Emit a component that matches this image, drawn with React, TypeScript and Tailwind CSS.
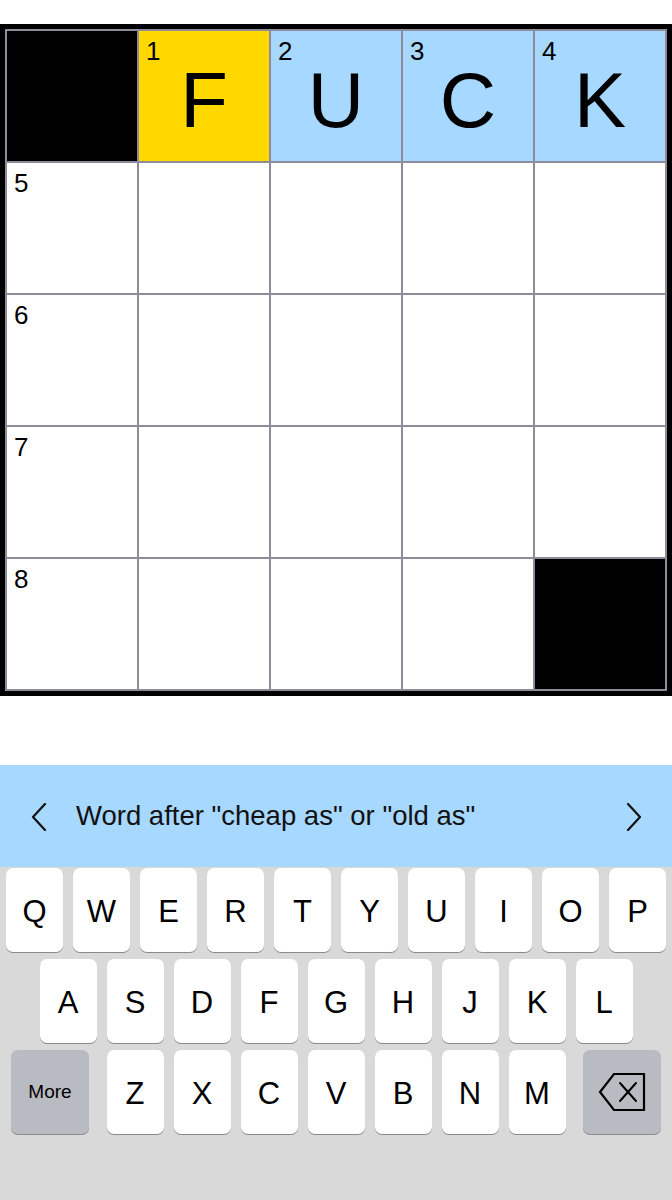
const cells: { n?: number; letter?: string; black?: boolean; tone?: 'yellow' | 'blue' }[] = [
  { black: true },
  { n: 1, letter: 'F', tone: 'yellow' },
  { n: 2, letter: 'U', tone: 'blue' },
  { n: 3, letter: 'C', tone: 'blue' },
  { n: 4, letter: 'K', tone: 'blue' },
  { n: 5 }, {}, {}, {}, {},
  { n: 6 }, {}, {}, {}, {},
  { n: 7 }, {}, {}, {}, {},
  { n: 8 }, {}, {}, {}, { black: true },
];

const row1 = ['Q', 'W', 'E', 'R', 'T', 'Y', 'U', 'I', 'O', 'P'];
const row2 = ['A', 'S', 'D', 'F', 'G', 'H', 'J', 'K', 'L'];
const row3 = ['Z', 'X', 'C', 'V', 'B', 'N', 'M'];

function Key({ label }: { label: string }) {
  return (
    <div className="w-[57px] h-[84px] rounded-[7px] bg-white shadow-[0_1px_0_#8a8a8e] flex items-center justify-center pt-[5px] text-[31px] text-black">
      {label}
    </div>
  );
}

export default function App() {
  return (
    <div className="w-[672px] h-[1200px] bg-white flex flex-col" style={{ fontFamily: '"Liberation Sans", Arial, sans-serif' }}>
      {/* Grid */}
      <div className="mt-[24px] bg-black p-[5px]">
        <div className="bg-[#8c8c9a] p-[2px] grid grid-cols-5 gap-[2px]">
          {cells.map((c, i) => (
            <div
              key={i}
              className={
                'relative h-[130px] flex items-center justify-center ' +
                (c.black ? 'bg-black' : c.tone === 'yellow' ? 'bg-[#ffd800]' : c.tone === 'blue' ? 'bg-[#a7d8ff]' : 'bg-white')
              }
            >
              {c.n && <span className="absolute left-[7px] top-[7px] text-[26px] leading-none text-black">{c.n}</span>}
              {c.letter && <span className="text-[78px] leading-none text-black pt-[8px]">{c.letter}</span>}
            </div>
          ))}
        </div>
      </div>

      {/* Clue bar */}
      <div className="mt-[69px] h-[102px] bg-[#a7d8ff] flex items-center">
        <svg className="ml-[31px] mt-[2px]" width="16" height="28" viewBox="0 0 16 28" fill="none">
          <polyline points="14,1 2,14 14,27" stroke="#111" strokeWidth="2.2" strokeLinecap="round" strokeLinejoin="round" />
        </svg>
        <span className="ml-[29px] text-[27.5px] text-[#111]">Word after "cheap as" or "old as"</span>
        <svg className="ml-auto mr-[30px] mt-[2px]" width="16" height="28" viewBox="0 0 16 28" fill="none">
          <polyline points="2,1 14,14 2,27" stroke="#111" strokeWidth="2.2" strokeLinecap="round" strokeLinejoin="round" />
        </svg>
      </div>

      {/* Keyboard */}
      <div className="flex-1 bg-[#d9d9d9] pt-[1px] flex flex-col gap-[7px]">
        <div className="flex gap-[10px] px-[6px]">
          {row1.map(k => <Key key={k} label={k} />)}
        </div>
        <div className="flex gap-[10px] justify-center">
          {row2.map(k => <Key key={k} label={k} />)}
        </div>
        <div className="flex items-center justify-between px-[11px]">
          <div className="w-[78px] h-[84px] rounded-[7px] bg-[#b8bbc1] shadow-[0_1px_0_#8a8a8e] flex items-center justify-center text-[19px] text-black">
            More
          </div>
          <div className="flex gap-[10px]">
            {row3.map(k => <Key key={k} label={k} />)}
          </div>
          <div className="w-[78px] h-[84px] rounded-[7px] bg-[#b8bbc1] shadow-[0_1px_0_#8a8a8e] flex items-center justify-center">
            <svg width="48" height="40" viewBox="0 0 48 40" fill="none">
              <path d="M16 2 H46 V38 H16 L2 20 Z" stroke="#000" strokeWidth="2.2" strokeLinejoin="miter" />
              <path d="M22 11 L38 29 M38 11 L22 29" stroke="#000" strokeWidth="2" strokeLinecap="round" />
            </svg>
          </div>
        </div>
      </div>
    </div>
  );
}
